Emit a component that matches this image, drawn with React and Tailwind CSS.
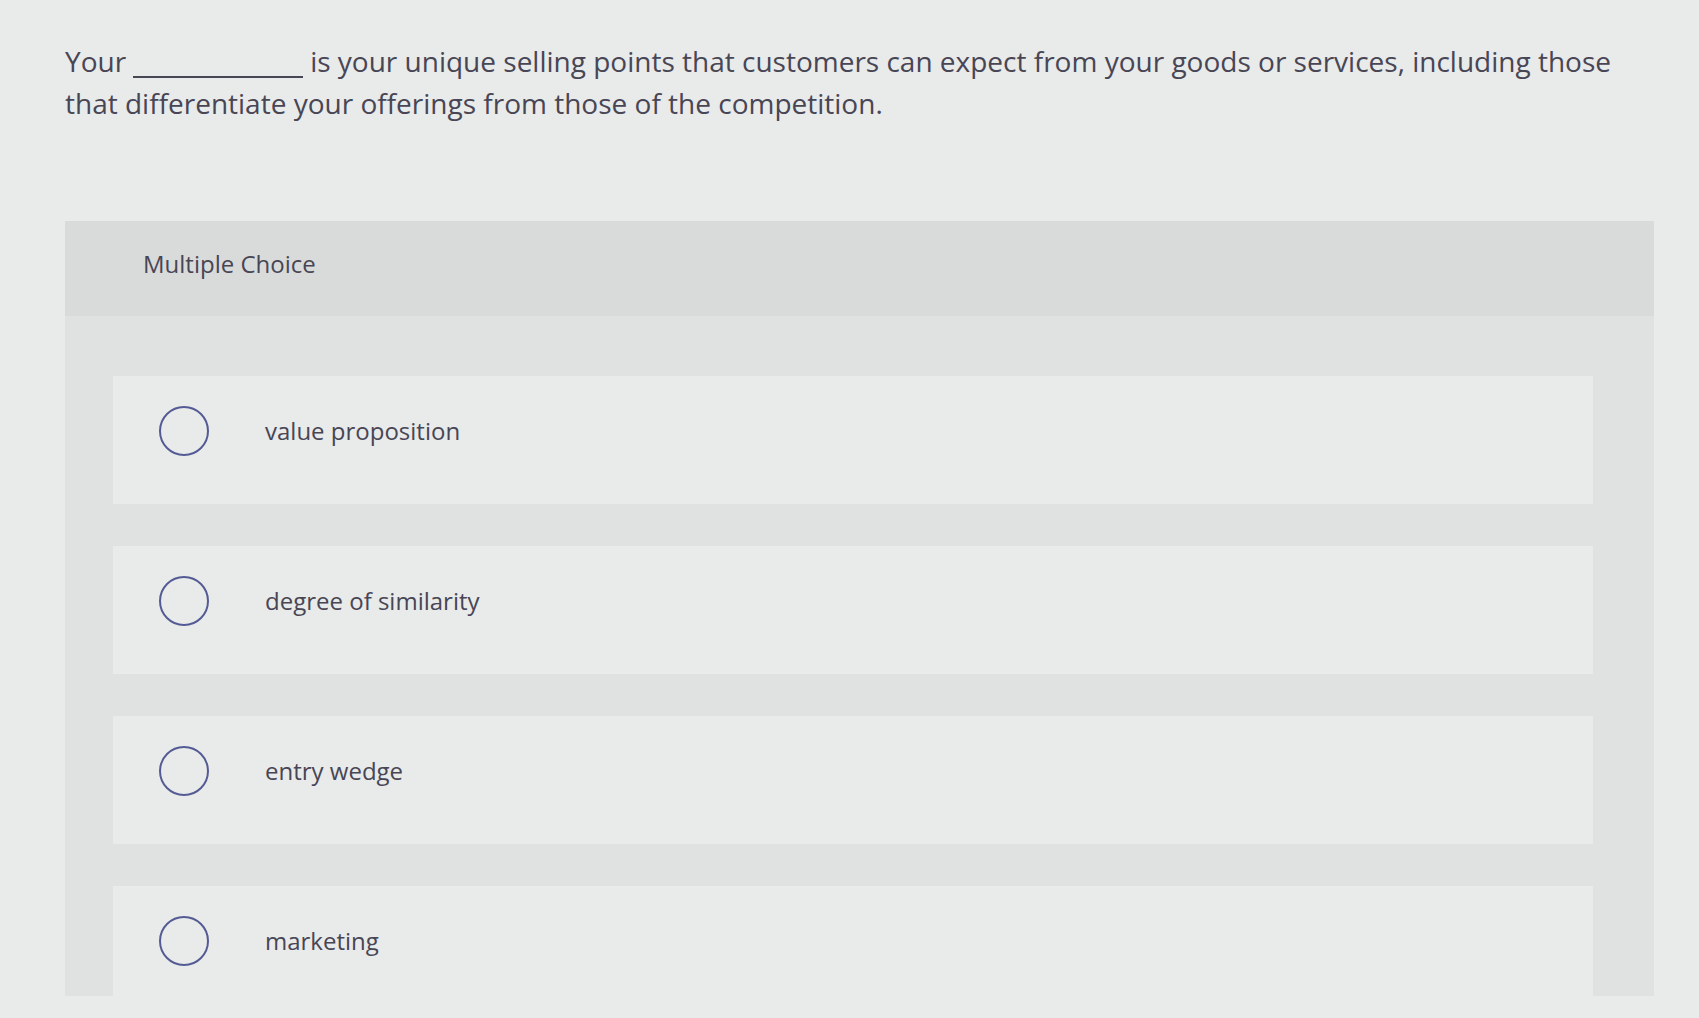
export default function App() {
  const options = ["value proposition", "degree of similarity", "entry wedge", "marketing"];
  return (
    <div
      className="relative h-[1018px] w-full overflow-hidden bg-[#e9eaea] text-[#484654]"
      style={{ fontFamily: "'Open Sans', Lato, sans-serif" }}
    >
      <p className="pl-[65px] pr-[45px] pt-[40px] text-[28px] leading-[42px]">
        Your
        <span className="mx-[7px] inline-block w-[170px] border-b-2 border-[#484654] align-[-6px]"></span>
        is your unique selling points that customers can expect from your goods or services, including those
        that differentiate your offerings from those of the competition.
      </p>

      <div className="ml-[65px] mr-[45px] mt-[97px] h-[775px] overflow-hidden bg-[#e0e1e1]">
        <div className="flex h-[95px] items-center bg-[#d9dbdb] pb-[10px] pl-[78px] text-[24px]">Multiple Choice</div>
        <div className="flex flex-col gap-[42px] pl-[48px] pr-[61px] pt-[60px]">
          {options.map((o) => (
            <div key={o} className="flex h-[128px] shrink-0 items-start bg-[#e9eaea] pl-[46px] pt-[30px]">
              <div className="flex h-[50px] items-center">
                <div className="h-[50px] w-[50px] rounded-full border-2 border-[#545b94]"></div>
                <span className="ml-[56px] text-[24px]">{o}</span>
              </div>
            </div>
          ))}
        </div>
      </div>
    </div>
  );
}
